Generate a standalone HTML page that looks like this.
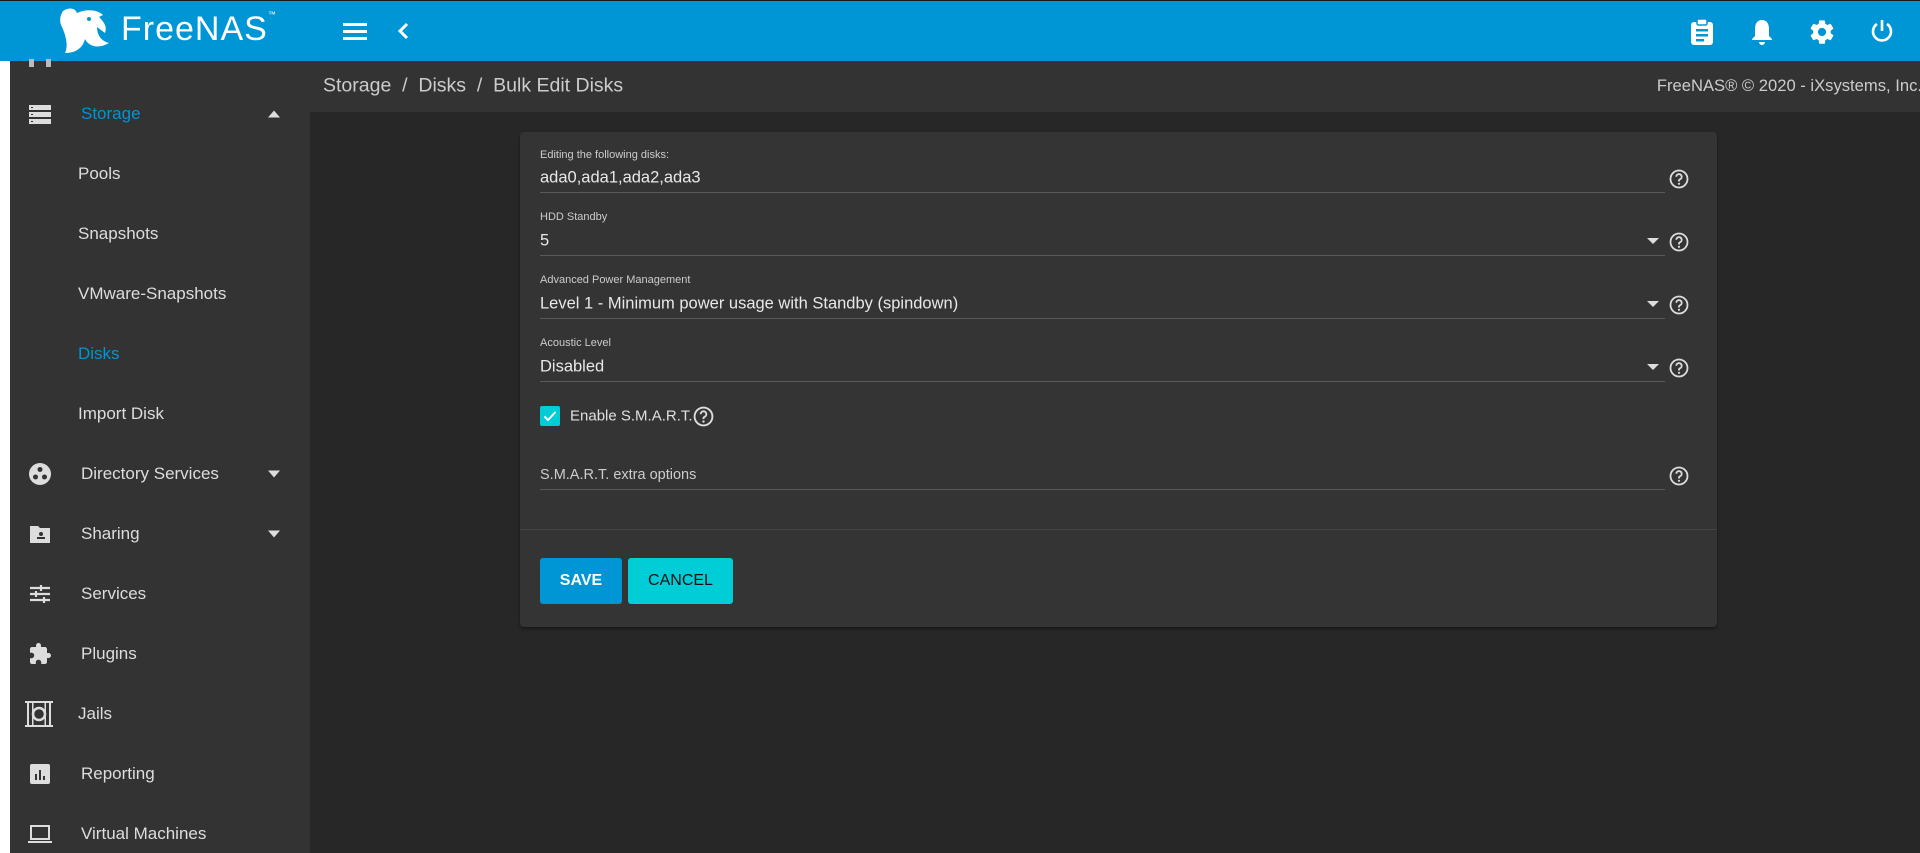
<!DOCTYPE html>
<html><head><meta charset="utf-8"><style>
*{margin:0;padding:0;box-sizing:border-box}
body{width:1920px;height:853px;overflow:hidden;background:#272727;font-family:"Liberation Sans",sans-serif;position:relative;color:#e6e6e6}
.a{position:absolute}
#top{left:0;top:0;width:1920px;height:61px;background:#0095d5;border-top:1px solid #1a1a1a}
#strip{left:0;top:61px;width:10px;height:792px;background:#fff}
#side{left:10px;top:61px;width:300px;height:792px;background:#333}
#bc{left:310px;top:61px;width:1610px;height:51px;background:#333}
.it{position:absolute;left:71px;font-size:17px;color:#ddd;transform:translateY(-50%)}
.sub{left:68px}
.ic{position:absolute;left:18px;width:24px;height:24px;transform:translateY(-50%)}
.car{position:absolute;left:258px;width:0;height:0;border-left:6px solid transparent;border-right:6px solid transparent;transform:translateY(-50%)}
#card{left:520px;top:132px;width:1197px;height:495px;background:#343434;border-radius:4px;box-shadow:0 2px 3px rgba(0,0,0,.4)}
.lb{position:absolute;left:20px;font-size:11px;color:#ccc;transform:translateY(-50%)}
.vl{position:absolute;left:20px;font-size:16.5px;color:#e8e8e8;transform:translateY(-50%)}
.ln{position:absolute;left:20px;width:1125px;height:1px;background:#5a5a5a}
.hp{position:absolute;left:1149px;width:20px;height:20px;transform:translateY(-50%)}
.dd{position:absolute;left:1127px;border-left:6px solid transparent;border-right:6px solid transparent;border-top:6px solid #ddd;transform:translateY(-50%)}
.btn{position:absolute;top:426px;height:46px;border-radius:3px;font-size:16px;font-weight:bold;display:flex;align-items:center;justify-content:center}
</style></head><body>
<div id="top" class="a">
 <svg class="a" style="left:55px;top:4px" width="60" height="52" viewBox="0 0 60 52"><path d="M8 6 C14 2 20 3 22 8 C30 4 42 4 48 10 L44 12 C50 18 52 22 50 28 L42 22 C42 30 46 36 54 38 C44 44 34 42 30 34 C28 42 22 48 10 48 C14 40 10 28 6 20 C4 14 6 9 8 6Z" fill="#fff"/><circle cx="34" cy="14" r="2" fill="#0095d5"/></svg>
 <div class="a" style="left:121px;top:9px;font-size:34px;color:#fff;letter-spacing:1px">FreeNAS<span style="font-size:8px;vertical-align:top">™</span></div>
 <svg class="a" style="left:343px;top:19px" width="24" height="22" viewBox="0 0 24 22"><rect x="0" y="3" width="24" height="3" fill="#fff"/><rect x="0" y="10" width="24" height="3" fill="#fff"/><rect x="0" y="17" width="24" height="3" fill="#fff"/></svg>
 <svg class="a" style="left:396px;top:20px" width="14" height="20" viewBox="0 0 14 20"><path d="M11 3 L4 10 L11 17" stroke="#fff" stroke-width="3" fill="none"/></svg>
 <svg class="a" style="left:1690px;top:17px" width="24" height="28" viewBox="0 0 24 28"><rect x="1" y="4" width="22" height="23" rx="3" fill="#fff"/><rect x="7" y="1" width="10" height="6" rx="1.5" fill="#fff" stroke="#0095d5" stroke-width="1.5"/><rect x="6" y="11" width="12" height="2.5" fill="#0095d5"/><rect x="6" y="16" width="12" height="2.5" fill="#0095d5"/><rect x="6" y="21" width="8" height="2.5" fill="#0095d5"/></svg>
 <svg class="a" style="left:1750px;top:17px" width="24" height="28" viewBox="0 0 24 28"><path d="M12 2 C17 2 19 6 19 11 L19 18 L22 21 L22 22 L2 22 L2 21 L5 18 L5 11 C5 6 7 2 12 2Z" fill="#fff"/><path d="M9 24 A3 3 0 0 0 15 24Z" fill="#fff"/></svg>
 <svg class="a" style="left:1808px;top:17px" width="28" height="28" viewBox="0 0 24 24"><path fill="#fff" d="M19.4 13c.04-.33.06-.66.06-1s-.02-.67-.06-1l2.1-1.650c.2-.15.24-.42.12-.64l-2-3.46c-.12-.22-.39-.3-.61-.22l-2.49 1c-.52-.4-1.080-.73-1.690-.98l-.38-2.65A.5.5 0 0 0 14 2h-4c-.25 0-.46.18-.49.42l-.38 2.65c-.61.25-1.17.59-1.69.98l-2.49-1c-.23-.09-.49 0-.61.22l-2 3.46c-.13.22-.07.49.12.64L4.57 11c-.04.33-.07.67-.07 1s.03.67.07 1l-2.11 1.65c-.19.15-.24.42-.12.64l2 3.46c.12.22.39.3.61.22l2.49-1c.52.4 1.08.73 1.69.98l.38 2.65c.03.24.24.42.49.42h4c.25 0 .46-.18.49-.42l.38-2.65c.61-.25 1.17-.59 1.69-.98l2.49 1c.23.09.49 0 .61-.22l2-3.46c.12-.22.07-.49-.12-.64L19.4 13zM12 15.5a3.5 3.5 0 1 1 0-7 3.5 3.5 0 0 1 0 7z"/></svg>
 <svg class="a" style="left:1869px;top:17px" width="26" height="26" viewBox="0 0 26 26"><path d="M8 6 A9 9 0 1 0 18 6" stroke="#fff" stroke-width="2.6" fill="none"/><line x1="13" y1="2" x2="13" y2="13" stroke="#fff" stroke-width="2.6"/></svg>
</div>
<div id="strip" class="a"></div>
<div id="side" class="a">
 <div class="a" style="left:19px;top:-2px;width:22px;height:8px;border-left:5px solid #bbb;border-right:5px solid #bbb"></div>
 <svg class="ic" style="top:53px" viewBox="0 0 24 24"><rect x="1" y="3" width="22" height="5" fill="#ddd"/><rect x="1" y="10" width="22" height="5" fill="#ddd"/><rect x="1" y="17" width="22" height="5" fill="#ddd"/><rect x="3" y="5" width="2" height="1" fill="#333"/><rect x="3" y="12" width="2" height="1" fill="#333"/><rect x="3" y="19" width="2" height="1" fill="#333"/></svg>
 <div class="it" style="top:53px;color:#0095d5">Storage</div>
 <div class="car" style="top:53px;border-bottom:7px solid #ddd"></div>
 <div class="it sub" style="top:113px">Pools</div>
 <div class="it sub" style="top:173px">Snapshots</div>
 <div class="it sub" style="top:233px">VMware-Snapshots</div>
 <div class="it sub" style="top:293px;color:#0095d5">Disks</div>
 <div class="it sub" style="top:353px">Import Disk</div>
 <svg class="ic" style="top:413px" viewBox="0 0 24 24"><circle cx="12" cy="12" r="11" fill="#ddd"/><circle cx="12" cy="7.5" r="2.5" fill="#333"/><circle cx="7.5" cy="15" r="2.5" fill="#333"/><circle cx="16.5" cy="15" r="2.5" fill="#333"/></svg>
 <div class="it" style="top:413px">Directory Services</div>
 <div class="car" style="top:413px;border-top:7px solid #ddd"></div>
 <svg class="ic" style="top:473px" viewBox="0 0 24 24"><path d="M2 4h8l2 2h10v15H2z" fill="#ddd"/><circle cx="13" cy="12" r="2" fill="#333"/><rect x="9" y="15" width="8" height="2" fill="#333"/></svg>
 <div class="it" style="top:473px">Sharing</div>
 <div class="car" style="top:473px;border-top:7px solid #ddd"></div>
 <svg class="ic" style="top:533px" viewBox="0 0 24 24"><g stroke="#ddd" stroke-width="2.2"><line x1="2" y1="6" x2="22" y2="6"/><line x1="2" y1="12" x2="22" y2="12"/><line x1="2" y1="18" x2="22" y2="18"/><line x1="13" y1="3" x2="13" y2="9"/><line x1="8" y1="9" x2="8" y2="15"/><line x1="16" y1="15" x2="16" y2="21"/></g></svg>
 <div class="it" style="top:533px">Services</div>
 <svg class="ic" style="top:593px" viewBox="0 0 24 24"><path d="M20.5 11H19V7c0-1.1-.9-2-2-2h-4V3.5a2.5 2.5 0 0 0-5 0V5H4c-1.1 0-2 .9-2 2v3.8h1.5c1.5 0 2.7 1.2 2.7 2.7S5 16.2 3.5 16.2H2V20c0 1.1.9 2 2 2h3.8v-1.5c0-1.5 1.2-2.7 2.7-2.7s2.7 1.2 2.7 2.7V22H17c1.1 0 2-.9 2-2v-4h1.5a2.5 2.5 0 0 0 0-5z" fill="#ddd"/></svg>
 <div class="it" style="top:593px">Plugins</div>
 <svg class="ic" style="top:653px;left:14px;width:30px;height:30px" viewBox="0 0 30 30"><g fill="#ddd"><rect x="1" y="2" width="28" height="2"/><rect x="1" y="26" width="28" height="2"/><rect x="3" y="4" width="2" height="22"/><rect x="25" y="4" width="2" height="22"/><rect x="8" y="4" width="1.5" height="22"/><rect x="20.5" y="4" width="1.5" height="22"/></g><circle cx="15" cy="15" r="6" fill="none" stroke="#ddd" stroke-width="2.5"/></svg>
 <div class="it" style="top:653px;left:68px">Jails</div>
 <svg class="ic" style="top:713px" viewBox="0 0 24 24"><rect x="2" y="2" width="20" height="20" rx="2" fill="#ddd"/><rect x="7" y="12" width="2" height="6" fill="#333"/><rect x="11" y="8" width="2" height="10" fill="#333"/><rect x="15" y="14" width="2" height="4" fill="#333"/></svg>
 <div class="it" style="top:713px">Reporting</div>
 <svg class="ic" style="top:773px" viewBox="0 0 24 24"><rect x="3" y="4" width="18" height="13" fill="none" stroke="#ddd" stroke-width="2"/><rect x="0" y="19" width="24" height="2" fill="#ddd"/></svg>
 <div class="it" style="top:773px">Virtual Machines</div>
</div>
<div id="bc" class="a">
 <div class="a" style="left:13px;top:25px;transform:translateY(-50%);font-size:19.5px;color:#ccc">Storage &nbsp;/&nbsp; Disks &nbsp;/&nbsp; Bulk Edit Disks</div>
 <div class="a" style="right:-2px;top:25px;transform:translateY(-50%);font-size:16.6px;color:#ccc;white-space:nowrap">FreeNAS® © 2020 - iXsystems, Inc.</div>
</div>
<div id="card" class="a">
 <div class="lb" style="top:23px">Editing the following disks:</div>
 <div class="vl" style="top:46px">ada0,ada1,ada2,ada3</div>
 <div class="ln" style="top:60px"></div>
 <svg class="hp" style="top:47px" viewBox="0 0 20 20"><circle cx="10" cy="10" r="8.5" fill="none" stroke="#ddd" stroke-width="1.8"/><path d="M7.3 7.8a2.7 2.7 0 1 1 3.7 2.5c-.7.3-1 .8-1 1.5v.7" fill="none" stroke="#ddd" stroke-width="1.8"/><circle cx="10" cy="14.8" r="1.1" fill="#ddd"/></svg>

 <div class="lb" style="top:85px">HDD Standby</div>
 <div class="vl" style="top:109px">5</div>
 <div class="ln" style="top:123px"></div>
 <div class="dd" style="top:109px"></div>
 <svg class="hp" style="top:110px" viewBox="0 0 20 20"><circle cx="10" cy="10" r="8.5" fill="none" stroke="#ddd" stroke-width="1.8"/><path d="M7.3 7.8a2.7 2.7 0 1 1 3.7 2.5c-.7.3-1 .8-1 1.5v.7" fill="none" stroke="#ddd" stroke-width="1.8"/><circle cx="10" cy="14.8" r="1.1" fill="#ddd"/></svg>

 <div class="lb" style="top:148px">Advanced Power Management</div>
 <div class="vl" style="top:172px">Level 1 - Minimum power usage with Standby (spindown)</div>
 <div class="ln" style="top:186px"></div>
 <div class="dd" style="top:172px"></div>
 <svg class="hp" style="top:173px" viewBox="0 0 20 20"><circle cx="10" cy="10" r="8.5" fill="none" stroke="#ddd" stroke-width="1.8"/><path d="M7.3 7.8a2.7 2.7 0 1 1 3.7 2.5c-.7.3-1 .8-1 1.5v.7" fill="none" stroke="#ddd" stroke-width="1.8"/><circle cx="10" cy="14.8" r="1.1" fill="#ddd"/></svg>

 <div class="lb" style="top:211px">Acoustic Level</div>
 <div class="vl" style="top:235px">Disabled</div>
 <div class="ln" style="top:249px"></div>
 <div class="dd" style="top:235px"></div>
 <svg class="hp" style="top:236px" viewBox="0 0 20 20"><circle cx="10" cy="10" r="8.5" fill="none" stroke="#ddd" stroke-width="1.8"/><path d="M7.3 7.8a2.7 2.7 0 1 1 3.7 2.5c-.7.3-1 .8-1 1.5v.7" fill="none" stroke="#ddd" stroke-width="1.8"/><circle cx="10" cy="14.8" r="1.1" fill="#ddd"/></svg>

 <svg class="a" style="left:20px;top:274px" width="20" height="20" viewBox="0 0 20 20"><rect width="20" height="20" rx="2" fill="#00cdd6"/><path d="M4.5 10.5l3.5 3.5 7.5-8" stroke="#fff" stroke-width="2" fill="none"/></svg>
 <div class="a" style="left:50px;top:284px;transform:translateY(-50%);font-size:15px;color:#e0e0e0">Enable S.M.A.R.T.</div>
 <svg class="a" style="left:173px;top:274px" width="21" height="21" viewBox="0 0 20 20"><circle cx="10" cy="10" r="8.5" fill="none" stroke="#ddd" stroke-width="1.8"/><path d="M7.3 7.8a2.7 2.7 0 1 1 3.7 2.5c-.7.3-1 .8-1 1.5v.7" fill="none" stroke="#ddd" stroke-width="1.8"/><circle cx="10" cy="14.8" r="1.1" fill="#ddd"/></svg>

 <div class="lb" style="top:343px;font-size:14.5px;color:#ccc">S.M.A.R.T. extra options</div>
 <div class="ln" style="top:357px"></div>
 <svg class="hp" style="top:344px" viewBox="0 0 20 20"><circle cx="10" cy="10" r="8.5" fill="none" stroke="#ddd" stroke-width="1.8"/><path d="M7.3 7.8a2.7 2.7 0 1 1 3.7 2.5c-.7.3-1 .8-1 1.5v.7" fill="none" stroke="#ddd" stroke-width="1.8"/><circle cx="10" cy="14.8" r="1.1" fill="#ddd"/></svg>

 <div class="a" style="left:0;top:397px;width:1197px;height:1px;background:#444"></div>
 <div class="btn" style="left:20px;width:82px;background:#0095d5;color:#fff">SAVE</div>
 <div class="btn" style="left:108px;width:105px;background:#00cdd6;color:#111;font-weight:normal">CANCEL</div>
</div>
</body></html>
